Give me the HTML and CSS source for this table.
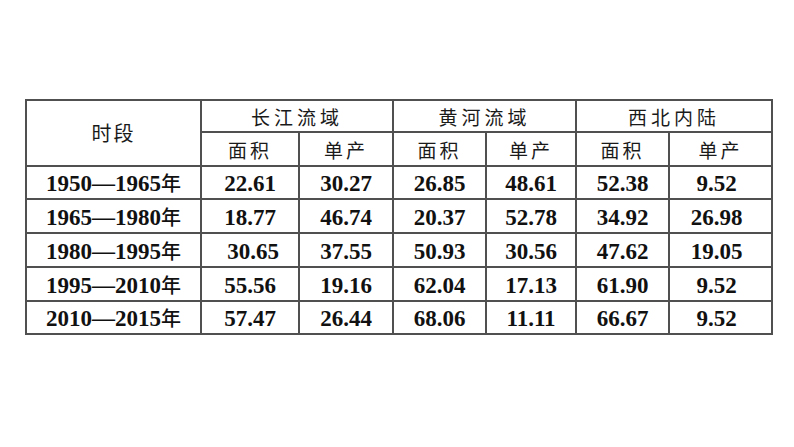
FILE: index.html
```html
<!DOCTYPE html>
<html lang="zh">
<head>
<meta charset="utf-8">
<link rel="stylesheet" href="styles.css">
</head>
<body>
<div class="page">
<table class="data">
<colgroup>
<col class="c-period"><col class="c1"><col class="c2"><col class="c3"><col class="c4"><col class="c5"><col class="c6">
</colgroup>
<thead>
<tr class="h1">
<th rowspan="2" class="zh period-head">时段</th>
<th colspan="2" class="zh region">长江流域</th>
<th colspan="2" class="zh region">黄河流域</th>
<th colspan="2" class="zh region">西北内陆</th>
</tr>
<tr class="h2">
<th class="zh sub">面积</th><th class="zh sub">单产</th>
<th class="zh sub">面积</th><th class="zh sub">单产</th>
<th class="zh sub">面积</th><th class="zh sub">单产</th>
</tr>
</thead>
<tbody>
<tr class="r1"><td class="period">1950—1965<span class="nian">年</span></td><td>22.61</td><td>30.27</td><td>26.85</td><td>48.61</td><td>52.38</td><td class="last">9.52</td></tr>
<tr class="r2"><td class="period">1965—1980<span class="nian">年</span></td><td>18.77</td><td>46.74</td><td>20.37</td><td>52.78</td><td>34.92</td><td class="last">26.98</td></tr>
<tr class="r3"><td class="period">1980—1995<span class="nian">年</span></td><td class="shift">30.65</td><td>37.55</td><td>50.93</td><td>30.56</td><td>47.62</td><td class="last">19.05</td></tr>
<tr class="r4"><td class="period">1995—2010<span class="nian">年</span></td><td>55.56</td><td>19.16</td><td>62.04</td><td>17.13</td><td>61.90</td><td class="last">9.52</td></tr>
<tr class="r5"><td class="period">2010—2015<span class="nian">年</span></td><td>57.47</td><td>26.44</td><td>68.06</td><td>11.11</td><td>66.67</td><td class="last">9.52</td></tr>
</tbody>
</table>
</div>
</body>
</html>
```
FILE: styles.css
```css
html, body {
  margin: 0;
  padding: 0;
  background: #ffffff;
}
.page {
  padding: 99px 0 0 25px;
}
.data {
  border-collapse: collapse;
  table-layout: fixed;
  width: 746px;
  color: #111;
}
.c-period { width: 175px; }
.c1 { width: 98px; }
.c2 { width: 94px; }
.c3 { width: 93px; }
.c4 { width: 90px; }
.c5 { width: 93px; }
.c6 { width: 103px; }
.data th, .data td {
  border: 2px solid #505050;
  padding: 0;
  text-align: center;
  vertical-align: middle;
  white-space: nowrap;
}
.zh {
  font-family: "Noto Sans CJK SC", sans-serif;
  font-weight: 400;
  color: #1a1a1a;
  line-height: 1;
}
.h1 { height: 32px; }
.h2 { height: 34px; }
.region {
  font-size: 19px;
  letter-spacing: 4px;
  padding: 7px 0 0 4px;
}
.sub {
  font-size: 19px;
  letter-spacing: 3px;
  padding: 7px 0 0 3px;
}
.period-head {
  font-size: 20px;
  letter-spacing: 2px;
  padding: 10px 0 0 2px;
}
.data td {
  font-family: "Liberation Serif", "Times New Roman", serif;
  font-weight: 700;
  font-size: 23px;
  line-height: 1;
  padding-top: 2px;
}
.nian {
  font-family: "Noto Sans CJK SC", sans-serif;
  font-weight: 500;
  font-size: 20px;
}
.data td.last { padding-right: 8px; }
.data td.shift { padding-left: 6px; }
.r1 { height: 33px; }
.r2 { height: 34px; }
.r3 { height: 34px; }
.r4 { height: 34px; }
.r5 { height: 33px; }
```
